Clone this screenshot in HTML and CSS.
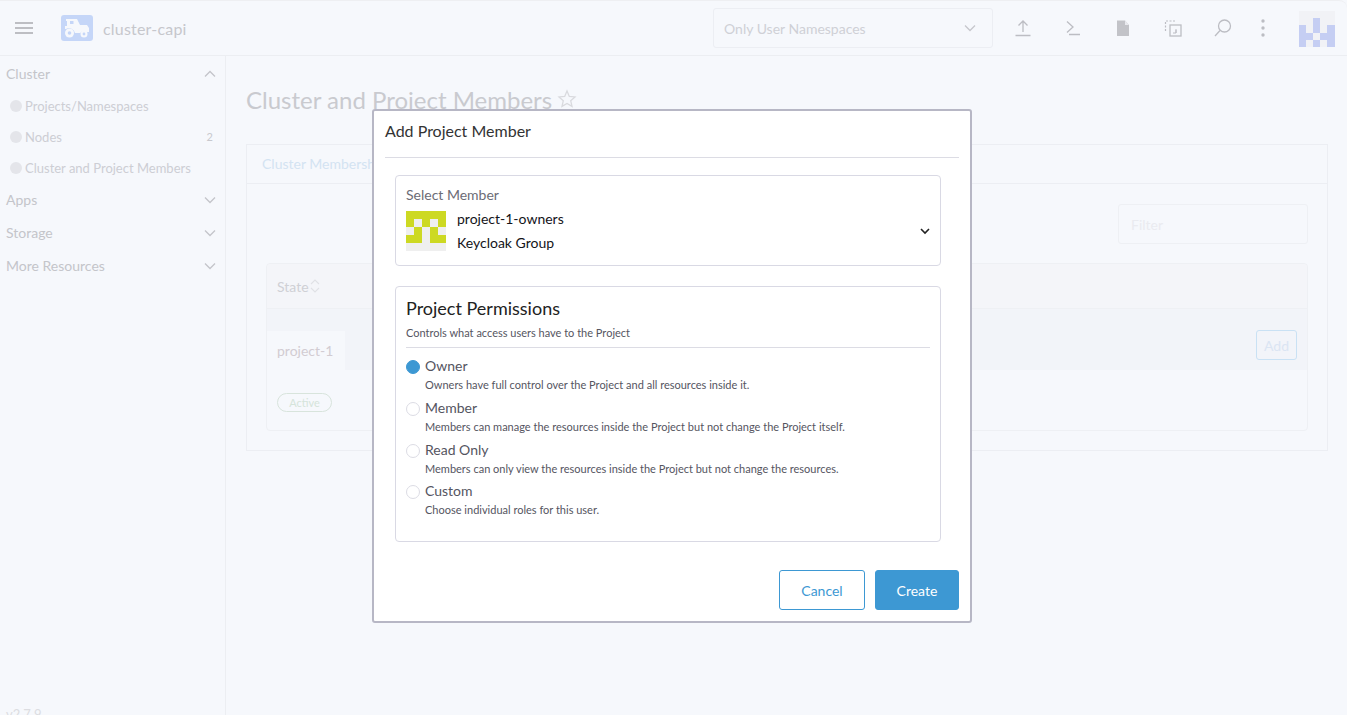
FILE: index.html
```html
<!DOCTYPE html>
<html lang="en">
<head>
<meta charset="utf-8">
<title>Cluster and Project Members</title>
<link rel="stylesheet" href="styles.css">
</head>
<body>
<div class="app">
  <header class="topbar">
    <button class="burger" aria-label="Menu"><span></span><span></span><span></span></button>
    <div class="logo">
      <svg viewBox="0 0 32 26" width="32" height="26"><rect width="32" height="26" rx="3" fill="#c5d6f8"/><g fill="#f6f8fc"><path d="M5 4h11l3 6h7l2 3v4h-3a5 5 0 0 0-6 1h-5a6 6 0 0 0-9-4H4v-3h2V6H5z"/><circle cx="8.500" cy="18" r="4.500"/><circle cx="23" cy="19" r="3.500"/></g><circle cx="8.500" cy="18" r="1.800" fill="#c5d6f8"/><circle cx="23" cy="19" r="1.400" fill="#c5d6f8"/><rect x="9" y="6" width="3.500" height="3" fill="#c5d6f8"/></svg>
    </div>
    <div class="cluster-name">cluster-capi</div>
    <div class="ns-select"><span>Only User Namespaces</span>
      <svg class="chev" viewBox="0 0 12 8" width="12" height="8"><path d="M1 1.500l5 5 5-5" fill="none" stroke="#c6c7cc" stroke-width="1.300"/></svg>
    </div>
    <div class="tools">
      <svg class="tool" viewBox="0 0 20 20" width="20" height="20"><path d="M10 14V3M5.500 7.500L10 3l4.500 4.500M2.500 17.500h15" fill="none" stroke="#bcbdc3" stroke-width="1.300"/></svg>
      <svg class="tool" viewBox="0 0 20 20" width="20" height="20"><path d="M4 3.500l6 5.500-6 5.500M6 16.500h11" fill="none" stroke="#bcbdc3" stroke-width="1.300"/></svg>
      <svg class="tool" viewBox="0 0 20 20" width="20" height="20"><path d="M4 2.500h8l4 4.500v10.500a.5.500 0 0 1-.5.500h-11a.5.500 0 0 1-.5-.5z" fill="#c2c3c8"/><path d="M12 2.500v4.500h4z" fill="#e8e9ee"/></svg>
      <svg class="tool" viewBox="0 0 20 20" width="20" height="20"><path d="M2.500 13V3h10" fill="none" stroke="#bcbdc3" stroke-width="1.200" stroke-dasharray="2 1.500"/><rect x="7" y="7" width="11" height="11" fill="none" stroke="#bcbdc3" stroke-width="1.300"/><path d="M10 15h3V11M13 12v3" fill="none" stroke="#bcbdc3"/></svg>
      <svg class="tool" viewBox="0 0 20 20" width="20" height="20"><circle cx="11.500" cy="8" r="6" fill="none" stroke="#bcbdc3" stroke-width="1.300"/><path d="M7 12.500L2 18" stroke="#bcbdc3" stroke-width="1.300"/></svg>
      <svg class="tool kebab" viewBox="0 0 6 20" width="6" height="20"><g fill="#bcbdc3"><circle cx="3" cy="3" r="1.700"/><circle cx="3" cy="10" r="1.700"/><circle cx="3" cy="17" r="1.700"/></g></svg>
    </div>
    <svg class="avatar" viewBox="0 0 5 5" width="37" height="36" shape-rendering="crispEdges"><rect width="5" height="5" fill="#f1f2f6"/><g fill="#c5cef3"><rect x="2" y="1" width="1" height="2"/><rect x="0" y="2" width="1" height="3"/><rect x="4" y="2" width="1" height="3"/><rect x="1" y="3" width="1" height="1"/><rect x="3" y="3" width="1" height="1"/><rect x="2" y="4" width="1" height="1"/></g></svg>
  </header>
  <div class="below">
    <nav class="sidebar">
      <div class="group"><span>Cluster</span><svg class="chev" viewBox="0 0 12 8" width="12" height="8"><path d="M1 6.500l5-5 5 5" fill="none" stroke="#c4c5ca" stroke-width="1.300"/></svg></div>
      <div class="item"><span class="globe"></span><span class="item-label">Projects/Namespaces</span></div>
      <div class="item"><span class="globe"></span><span class="item-label">Nodes</span><span class="count">2</span></div>
      <div class="item"><span class="globe"></span><span class="item-label">Cluster and Project Members</span></div>
      <div class="group"><span>Apps</span><svg class="chev" viewBox="0 0 12 8" width="12" height="8"><path d="M1 1.500l5 5 5-5" fill="none" stroke="#c4c5ca" stroke-width="1.300"/></svg></div>
      <div class="group"><span>Storage</span><svg class="chev" viewBox="0 0 12 8" width="12" height="8"><path d="M1 1.500l5 5 5-5" fill="none" stroke="#c4c5ca" stroke-width="1.300"/></svg></div>
      <div class="group"><span>More Resources</span><svg class="chev" viewBox="0 0 12 8" width="12" height="8"><path d="M1 1.500l5 5 5-5" fill="none" stroke="#c4c5ca" stroke-width="1.300"/></svg></div>
      <div class="version">v2.7.9</div>
    </nav>
    <main class="content">
      <h1 class="page-title">Cluster and Project Members <svg viewBox="0 0 20 20" width="20" height="20"><path d="M10 2l2.300 5.400 5.700.5-4.300 3.800 1.300 5.700L10 14.400l-5 3 1.300-5.700L2 7.900l5.700-.5z" fill="none" stroke="#d9dade" stroke-width="1.300"/></svg></h1>
      <section class="card">
        <div class="tabs"><span class="tab">Cluster Membership</span></div>
        <div class="card-body">
          <div class="filter-row"><div class="filter">Filter</div></div>
          <div class="table">
            <div class="thead"><span>State</span><svg viewBox="0 0 10 16" width="10" height="16"><path d="M1 6l4-4 4 4M1 10l4 4 4-4" fill="none" stroke="#e0e1e6" stroke-width="1.100"/></svg></div>
            <div class="row-group">
              <div class="row-tab">project-1</div>
              <button class="add">Add</button>
            </div>
            <div class="row-foot"><span class="badge">Active</span></div>
          </div>
        </div>
      </section>
    </main>
  </div>
</div>
<div class="modal" role="dialog">
  <div class="modal-title">Add Project Member</div>
  <div class="modal-body">
    <div class="select-box">
      <div class="select-label">Select Member</div>
      <div class="member">
        <svg class="member-avatar" viewBox="0 0 5 5" width="40" height="40" shape-rendering="crispEdges"><rect width="5" height="5" fill="#efefef"/><g fill="#cdd923"><rect width="5" height="1"/><rect y="1" width="1" height="1"/><rect x="2" y="1" width="1" height="1"/><rect x="4" y="1" width="1" height="1"/><rect x="1" y="2" width="1" height="1"/><rect x="3" y="2" width="1" height="1"/><rect y="3" width="2" height="1"/><rect x="3" y="3" width="2" height="1"/></g></svg>
        <div class="member-text"><div>project-1-owners</div><div>Keycloak Group</div></div>
        <svg class="caret" viewBox="0 0 10 7" width="10" height="7"><path d="M1 1l4 4 4-4" fill="none" stroke="#222" stroke-width="1.600"/></svg>
      </div>
    </div>
    <div class="perm-box">
      <h2 class="perm-title">Project Permissions</h2>
      <p class="perm-sub">Controls what access users have to the Project</p>
      <div class="perm-options">
        <div class="option"><span class="radio on"></span><div><div class="opt-name">Owner</div><div class="opt-desc">Owners have full control over the Project and all resources inside it.</div></div></div>
        <div class="option"><span class="radio"></span><div><div class="opt-name">Member</div><div class="opt-desc">Members can manage the resources inside the Project but not change the Project itself.</div></div></div>
        <div class="option"><span class="radio"></span><div><div class="opt-name">Read Only</div><div class="opt-desc">Members can only view the resources inside the Project but not change the resources.</div></div></div>
        <div class="option"><span class="radio"></span><div><div class="opt-name">Custom</div><div class="opt-desc">Choose individual roles for this user.</div></div></div>
      </div>
    </div>
  </div>
  <div class="modal-foot">
    <button class="btn btn-cancel">Cancel</button>
    <button class="btn btn-create">Create</button>
  </div>
</div>
</body>
</html>
```
FILE: styles.css
```css
* { box-sizing: border-box; }
html, body { margin: 0; height: 715px; overflow: hidden; }
body { background: #f6f8fc; font-family: Lato, "Liberation Sans", sans-serif; color: #c4c5ca; }
.app { height: 715px; display: flex; flex-direction: column; border-top: 1px solid #eeeff2; border-top-right-radius: 8px; }
.topbar { height: 55px; flex: none; display: flex; align-items: center; border-bottom: 1px solid #eceef2; position: relative; }
.burger { margin-left: 15px; width: 18px; height: 12px; padding: 0; border: 0; background: none; display: flex; flex-direction: column; justify-content: space-between; }
.burger span { height: 2px; background: #bdbec3; }
.logo { margin-left: 28px; height: 26px; }
.cluster-name { margin-left: 10px; font-size: 16px; color: #c6c7cc; letter-spacing: .2px; }
.ns-select { margin-left: auto; width: 280px; height: 40px; border: 1px solid #eceef3; border-radius: 3px; display: flex; align-items: center; justify-content: space-between; padding: 0 16px 0 10px; font-size: 14px; color: #cfd0d6; }
.tools { display: flex; align-items: center; margin-left: 20px; gap: 30px; }
.kebab { margin-left: -3px; }
.avatar { margin: 0 12px 0 32px; position: relative; top: 1px; }
.below { flex: 1; display: flex; min-height: 0; }
.sidebar { width: 226px; flex: none; border-right: 1px solid #eceef2; display: flex; flex-direction: column; padding-top: 1px; position: relative; font-size: 14px; }
.group { height: 33px; display: flex; align-items: center; justify-content: space-between; padding: 0 9px 0 6px; color: #c4c5ca; }
.item { height: 31px; display: flex; align-items: center; padding: 0 12px 0 10px; font-size: 13px; color: #cdced4; }
.item-label { flex: 1; margin-left: 0; }
.globe { width: 12px; height: 12px; border-radius: 50%; background: #e4e5ea; margin-right: 3px; flex: none; }
.count { font-size: 11px; color: #c8c9ce; }
.version { margin-top: auto; color: #dcdde1; font-size: 13px; position: relative; top: 7px; padding-left: 6px; }
.content { flex: 1; padding: 0 19px 0 20px; }
.page-title { margin: 29px 0 0; height: 59px; font-size: 24px; font-weight: 400; color: #c9cacf; display: flex; gap: 5px; align-items: flex-start; line-height: 30px; }
.page-title svg { margin-top: 4px; }
.card { border: 1px solid #eceef3; height: 307px; }
.tabs { height: 39px; border-bottom: 1px solid #eceef3; padding: 10px 15px; font-size: 14px; color: #d3e3f2; }
.card-body { padding: 20px 19px; }
.filter-row { display: flex; justify-content: flex-end; height: 59px; }
.filter { width: 190px; height: 40px; border: 1px solid #eef0f4; border-radius: 3px; padding: 12px; font-size: 14px; line-height: 16px; color: #eaebf0; }
.table { height: 168px; border: 1px solid #eef0f4; border-radius: 4px; }
.thead { height: 45px; background: #f4f5f9; border-bottom: 1px solid #eef0f4; display: flex; align-items: center; padding-left: 10px; font-size: 14px; color: #cfd0d5; gap: 1px; border-radius: 4px 4px 0 0; }
.row-group { height: 61px; background: #f2f4f9; display: flex; align-items: flex-end; justify-content: space-between; padding-right: 10px; position: relative; }
.row-tab { width: 78px; height: 39px; background: #f6f8fc; clip-path: polygon(0 0, 78px 0, 100% 24px, 100% 100%, 0 100%); padding: 11px 10px; font-size: 14px; line-height: 18px; color: #d2ccd2; }
.add { height: 30px; width: 41px; border: 1px solid #c9e1f4; border-radius: 3px; background: none; margin-bottom: 10px; padding: 0; font: 14px Lato, sans-serif; color: #dbe5f3; }
.row-foot { padding: 21px 10px; }
.badge { display: inline-block; width: 55px; height: 19px; border: 1px solid #d8e4dc; border-radius: 10px; font-size: 11px; line-height: 18px; text-align: center; color: #d5e4da; }
.modal { position: absolute; left: 372px; top: 109px; width: 600px; height: 514px; background: #fff; border: 2px solid #b7b7c5; border-radius: 3px; padding: 0 11px; color: #4b4b55; display: flex; flex-direction: column; }
.modal-title { height: 47px; border-bottom: 1px solid #dcdce4; padding: 10px 0 0; font-size: 16px; line-height: 20px; color: #333; }
.modal-body { padding: 17px 18px 0 10px; flex: 1; }
.select-box { height: 91px; border: 1px solid #d9d9e4; border-radius: 4px; padding: 10px; }
.select-label { font-size: 14px; line-height: 18px; color: #6c6c76; }
.member { display: flex; align-items: center; margin-top: 3px; position: relative; }
.member-text { margin-left: 11px; color: #141419; font-size: 14px; line-height: 24px; }
.member-avatar { flex: none; }
.caret { margin-left: auto; margin-right: 0; }
.perm-box { margin-top: 20px; height: 256px; border: 1px solid #d9d9e4; border-radius: 4px; padding: 10px 10px 0; }
.perm-title { margin: 0; font-size: 18px; font-weight: 400; line-height: 22px; color: #222; }
.perm-sub { margin: 6px 0 0; padding-bottom: 7px; border-bottom: 1px solid #dcdce4; font-size: 11px; line-height: 15px; color: #55555f; }
.perm-options { padding-top: 9px; }
.option { display: flex; gap: 5px; height: 41.800px; }
.radio { width: 14px; height: 14px; border-radius: 50%; border: 1px solid #dcdce4; margin-top: 3px; flex: none; background: #fff; }
.radio.on { background: #3d98d3; border-color: #3d98d3; }
.opt-name { font-size: 14px; line-height: 18px; color: #55555f; }
.opt-desc { font-size: 11px; line-height: 15px; margin-top: 2px; color: #55555f; }
.modal-foot { display: flex; justify-content: flex-end; gap: 10px; padding: 0 0 11px; }
.btn { height: 40px; border-radius: 3px; font: 14px Lato, sans-serif; }
.btn-cancel { width: 86px; background: #fff; border: 1px solid #3d98d3; color: #3d98d3; }
.btn-create { width: 84px; background: #3d98d3; border: 1px solid #3d98d3; color: #fff; }
```
